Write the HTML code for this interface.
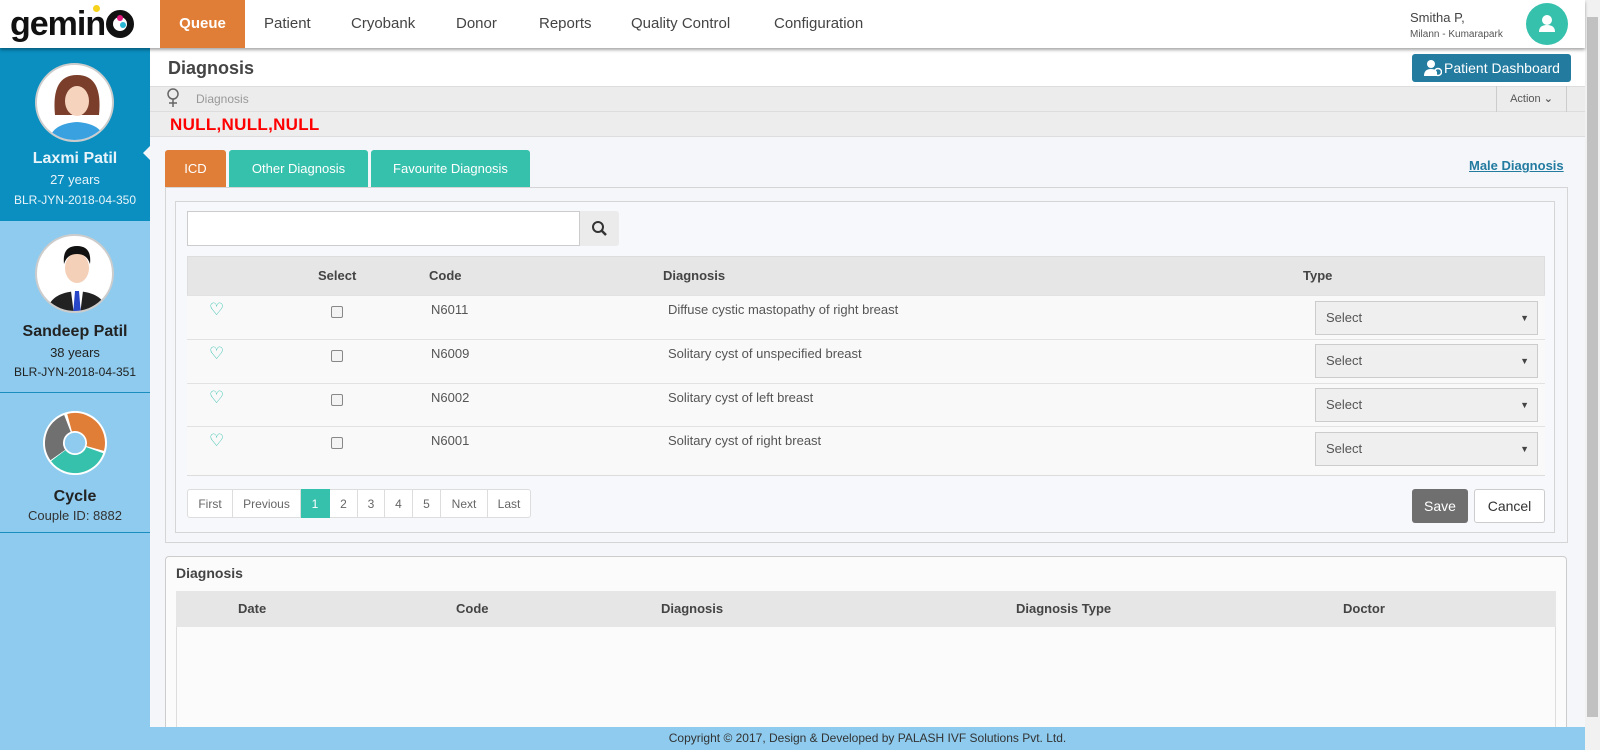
<!DOCTYPE html>
<html><head><meta charset="utf-8"><style>
*{box-sizing:border-box;margin:0;padding:0}
html,body{width:1600px;height:750px;overflow:hidden}
body{background:#f5f6fa;font-family:"Liberation Sans","DejaVu Sans",sans-serif;color:#444;position:relative}
.a{position:absolute}
.nav{left:0;top:0;width:1585px;height:48px;background:#fff;box-shadow:0 2px 3px rgba(0,0,0,.35);z-index:5}
.ni{top:0;height:48px;line-height:48px;font-size:15px;color:#444}
.side{left:0;top:48px;width:150px;height:702px;background:#8ecbee}
.t{font-size:13px}
.tab{top:150px;height:37px;line-height:37px;color:#fff;font-size:13px;text-align:center;border-radius:3px 3px 0 0}
.row{left:187px;width:1358px;height:44px;background:#f9f9f9;border-top:1px solid #e2e2e2}
.sel{left:1128px;top:0;width:223px;height:34px;background:#efefef;border:1px solid #ccc;font-size:13px;line-height:32px;padding-left:10px;color:#555}
.sel:after{content:"▼";position:absolute;right:8px;font-size:9px;color:#444}
.cb{width:12px;height:12px;border:1px solid #888;border-radius:2px;background:#f3f3f3}
.pg{top:489px;height:29px;line-height:28px;font-size:12px;color:#666;text-align:center;border:1px solid #ddd;border-left:none;background:#fff}
</style></head><body>
<div class="a nav">
  <div class="a" style="left:10px;top:6px;font-size:34px;line-height:36px;font-weight:bold;color:#111;letter-spacing:-1px">gemin<span style="display:inline-block;width:28px;height:28px;border-radius:50%;border:7px solid #111;vertical-align:-3px;margin-left:1px;position:relative"><span style="position:absolute;left:4px;top:-2px;width:6px;height:6px;border-radius:50%;background:#e6197e"></span><span style="position:absolute;left:7px;top:5px;width:6px;height:6px;border-radius:50%;background:#2ab7d4"></span></span></div>
  <div class="a" style="left:93px;top:5px;width:7px;height:7px;border-radius:50%;background:#f6d21b"></div>
  <div class="a ni" style="left:160px;width:85px;background:#e07e37;color:#fff;text-align:center;font-weight:bold">Queue</div>
  <div class="a ni" style="left:264px">Patient</div>
  <div class="a ni" style="left:351px">Cryobank</div>
  <div class="a ni" style="left:456px">Donor</div>
  <div class="a ni" style="left:539px">Reports</div>
  <div class="a ni" style="left:631px">Quality Control</div>
  <div class="a ni" style="left:774px">Configuration</div>
  <div class="a" style="left:1410px;top:10px;font-size:13px;color:#444">Smitha P,</div>
  <div class="a" style="left:1410px;top:29px;font-size:10px;color:#555">Milann - Kumarapark</div>
  <div class="a" style="left:1526px;top:3px;width:42px;height:42px;border-radius:50%;background:#36c1ad"><svg width="42" height="42"><circle cx="21" cy="17" r="5" fill="#fff"/><path d="M13 29 q0-7 8-7 q8 0 8 7z" fill="#fff"/></svg></div>
</div>
<div class="a" style="left:1585px;top:0;width:15px;height:750px;background:#f1f1f1"><div class="a" style="left:2px;top:17px;width:11px;height:700px;background:#c1c1c1"></div></div>
<div class="a side"></div>
<div class="a" style="left:0;top:48px;width:150px;height:173px;background:#0a8fc0"></div>
<div class="a" style="left:143px;top:145px;width:0;height:0;border-top:8px solid transparent;border-bottom:8px solid transparent;border-right:8px solid #f5f6fa"></div>
<div class="a" style="left:35px;top:63px;width:79px;height:79px;border-radius:50%;background:#fff;border:2px solid #ccc;overflow:hidden"><svg width="79" height="79"><path d="M18 50 q-4-40 22-40 q26 0 22 40z" fill="#7a3e2a"/><ellipse cx="40" cy="36" rx="12" ry="15" fill="#f6d3bd"/><path d="M12 79 q0-20 28-22 q28 2 28 22z" fill="#3aa1e0"/></svg></div>
<div class="a" style="left:35px;top:234px;width:79px;height:79px;border-radius:50%;background:#fff;border:2px solid #ccc;overflow:hidden"><svg width="79" height="79"><ellipse cx="40" cy="32" rx="12" ry="15" fill="#f4d0b8"/><path d="M27 28 q-2-18 13-18 q15 0 13 18 q-3-10-13-10 q-10 0-13 10z" fill="#111"/><path d="M10 79 q0-22 30-24 q30 2 30 24z" fill="#222"/><path d="M34 55 l6 0 l6 0 l-3 24 l-6 0z" fill="#fff"/><path d="M38 55 l4 0 l2 24 l-8 0z" fill="#2746c8"/></svg></div>
<div class="a" style="left:0;top:150px;width:150px;text-align:center;color:#e8f4fa;font-size:16px;font-weight:bold">Laxmi Patil</div>
<div class="a t" style="left:0;top:172px;width:150px;text-align:center;color:#e8f4fa">27 years</div>
<div class="a" style="left:0;top:193px;width:150px;text-align:center;color:#e8f4fa;font-size:12px">BLR-JYN-2018-04-350</div>
<div class="a" style="left:0;top:323px;width:150px;text-align:center;color:#222;font-size:16px;font-weight:bold">Sandeep Patil</div>
<div class="a t" style="left:0;top:345px;width:150px;text-align:center;color:#222">38 years</div>
<div class="a" style="left:0;top:365px;width:150px;text-align:center;color:#222;font-size:12px">BLR-JYN-2018-04-351</div>
<div class="a" style="left:0;top:392px;width:150px;height:1px;background:#1a8fbf"></div>
<div class="a" style="left:0;top:532px;width:150px;height:1px;background:#1a8fbf"></div>
<svg class="a" style="left:42px;top:410px" width="66" height="66" viewBox="-33 -33 66 66"><circle r="32" fill="#fff"/>
<g transform="rotate(-105)" fill="none" stroke-width="18"><circle r="21" stroke="#e07e37" stroke-dasharray="44 200"/></g>
<g transform="rotate(20)" fill="none" stroke-width="18"><circle r="21" stroke="#36c1ad" stroke-dasharray="45 200"/></g>
<g transform="rotate(145)" fill="none" stroke-width="18"><circle r="21" stroke="#707070" stroke-dasharray="38 200"/></g>
<circle r="11" fill="#8ecbee" stroke="#fff" stroke-width="1.5"/></svg>
<div class="a" style="left:0;top:488px;width:150px;text-align:center;color:#222;font-size:16px;font-weight:bold">Cycle</div>
<div class="a t" style="left:0;top:508px;width:150px;text-align:center;color:#333">Couple ID: 8882</div>

<div class="a" style="left:150px;top:48px;width:1435px;height:38px;background:#fff"></div>
<div class="a" style="left:168px;top:58px;font-size:18px;font-weight:bold;color:#444">Diagnosis</div>
<div class="a" style="left:1412px;top:54px;width:159px;height:28px;background:#237ba0;border-radius:3px;color:#fff;font-size:14px;line-height:28px;padding-left:32px">Patient Dashboard</div>
<svg class="a" style="left:1424px;top:59px" width="18" height="18"><circle cx="7" cy="5" r="4" fill="#fff"/><path d="M0 17 q0-7 7-7 q5 0 6 3 l0 4z" fill="#fff"/><circle cx="14" cy="13" r="3.5" fill="none" stroke="#fff" stroke-width="1.5"/></svg>
<div class="a" style="left:150px;top:86px;width:1435px;height:26px;background:#ececec;border-top:1px solid #ddd;border-bottom:1px solid #ddd"></div>
<svg class="a" style="left:166px;top:88px" width="14" height="20"><circle cx="7" cy="6" r="5" fill="none" stroke="#666" stroke-width="1.5"/><path d="M7 11v8M3 15h8" stroke="#666" stroke-width="1.5"/></svg>
<div class="a" style="left:196px;top:92px;font-size:12px;color:#999">Diagnosis</div>
<div class="a" style="left:1496px;top:86px;width:71px;height:26px;border-left:1px solid #ccc;border-right:1px solid #ccc;font-size:11px;line-height:26px;text-align:center;color:#555">Action <b>&#8964;</b></div>
<div class="a" style="left:150px;top:112px;width:1435px;height:25px;background:#ededed;border-bottom:1px solid #ddd"></div>
<div class="a" style="left:170px;top:115px;font-size:17px;color:#f00;font-weight:bold;letter-spacing:0.3px">NULL,NULL,NULL</div>

<div class="a tab" style="left:165px;width:61px;background:#e07e37">ICD</div>
<div class="a tab" style="left:229px;width:139px;background:#36c1ad">Other Diagnosis</div>
<div class="a tab" style="left:371px;width:159px;background:#36c1ad">Favourite Diagnosis</div>
<div class="a" style="left:1469px;top:158px;font-size:13px;font-weight:bold;color:#237ba0;text-decoration:underline">Male Diagnosis</div>
<div class="a" style="left:165px;top:187px;width:1403px;height:356px;border:1px solid #d5d5d5;background:#f5f6fa"></div>
<div class="a" style="left:175px;top:201px;width:1380px;height:332px;border:1px solid #d5d5d5;background:#f7f8fb"></div>
<div class="a" style="left:187px;top:211px;width:393px;height:35px;background:#fff;border:1px solid #ccc"></div>
<div class="a" style="left:580px;top:211px;width:39px;height:35px;background:#ebebeb;border-radius:0 3px 3px 0"><svg width="39" height="35"><circle cx="18" cy="16" r="5" fill="none" stroke="#333" stroke-width="2"/><path d="M22 20l4 4" stroke="#333" stroke-width="2.5"/></svg></div>
<div class="a" style="left:187px;top:256px;width:1358px;height:220px;border:1px solid #ddd;background:#f9f9f9"></div>
<div class="a" style="left:188px;top:257px;width:1356px;height:38px;background:#e6e6e6;font-size:13px;font-weight:bold;color:#444;line-height:38px">
<span class="a" style="left:130px">Select</span><span class="a" style="left:241px">Code</span><span class="a" style="left:475px">Diagnosis</span><span class="a" style="left:1115px">Type</span></div>

<div class="a row" style="top:295px"><span class="a" style="left:22px;top:4px;color:#36c1ad;font-size:17px">♡</span><div class="a cb" style="left:144px;top:10px"></div><span class="a t" style="left:244px;top:6px;color:#555">N6011</span><span class="a t" style="left:481px;top:6px;color:#555">Diffuse cystic mastopathy of right breast</span><div class="a sel" style="top:5px">Select</div></div>
<div class="a row" style="top:339px"><span class="a" style="left:22px;top:4px;color:#36c1ad;font-size:17px">♡</span><div class="a cb" style="left:144px;top:10px"></div><span class="a t" style="left:244px;top:6px;color:#555">N6009</span><span class="a t" style="left:481px;top:6px;color:#555">Solitary cyst of unspecified breast</span><div class="a sel" style="top:4px">Select</div></div>
<div class="a row" style="top:383px"><span class="a" style="left:22px;top:4px;color:#36c1ad;font-size:17px">♡</span><div class="a cb" style="left:144px;top:10px"></div><span class="a t" style="left:244px;top:6px;color:#555">N6002</span><span class="a t" style="left:481px;top:6px;color:#555">Solitary cyst of left breast</span><div class="a sel" style="top:4px">Select</div></div>
<div class="a row" style="top:426px;height:49px"><span class="a" style="left:22px;top:4px;color:#36c1ad;font-size:17px">♡</span><div class="a cb" style="left:144px;top:10px"></div><span class="a t" style="left:244px;top:6px;color:#555">N6001</span><span class="a t" style="left:481px;top:6px;color:#555">Solitary cyst of right breast</span><div class="a sel" style="top:5px">Select</div></div>

<div class="a pg" style="left:187px;width:46px;border-left:1px solid #ddd;border-radius:3px 0 0 3px">First</div>
<div class="a pg" style="left:233px;width:68px">Previous</div>
<div class="a pg" style="left:301px;width:29px;background:#36c1ad;color:#fff;border-color:#36c1ad">1</div>
<div class="a pg" style="left:330px;width:28px">2</div>
<div class="a pg" style="left:358px;width:27px">3</div>
<div class="a pg" style="left:385px;width:28px">4</div>
<div class="a pg" style="left:413px;width:28px">5</div>
<div class="a pg" style="left:441px;width:47px">Next</div>
<div class="a pg" style="left:488px;width:43px;border-radius:0 3px 3px 0">Last</div>
<div class="a" style="left:1412px;top:489px;width:56px;height:34px;background:#6f6f6f;color:#fff;border-radius:3px;font-size:14px;line-height:34px;text-align:center">Save</div>
<div class="a" style="left:1474px;top:489px;width:71px;height:34px;background:#fff;border:1px solid #ccc;border-radius:3px;font-size:14px;line-height:32px;text-align:center;color:#333">Cancel</div>

<div class="a" style="left:165px;top:556px;width:1402px;height:180px;background:#fbfbfb;border:1px solid #ccc;border-radius:4px"></div>
<div class="a" style="left:176px;top:565px;font-size:14px;font-weight:bold;color:#444">Diagnosis</div>
<div class="a" style="left:176px;top:591px;width:1380px;height:36px;background:#e6e6e6;font-size:13px;font-weight:bold;color:#444;line-height:36px">
<span class="a" style="left:62px">Date</span><span class="a" style="left:280px">Code</span><span class="a" style="left:485px">Diagnosis</span><span class="a" style="left:840px">Diagnosis Type</span><span class="a" style="left:1167px">Doctor</span></div>
<div class="a" style="left:176px;top:627px;width:1px;height:100px;background:#ddd"></div>
<div class="a" style="left:1555px;top:627px;width:1px;height:100px;background:#ddd"></div>
<div class="a" style="left:150px;top:727px;width:1435px;height:23px;background:#8ecbee;text-align:center;font-size:12px;line-height:23px;color:#333;z-index:6">Copyright © 2017, Design &amp; Developed by PALASH IVF Solutions Pvt. Ltd.</div>
</body></html>
